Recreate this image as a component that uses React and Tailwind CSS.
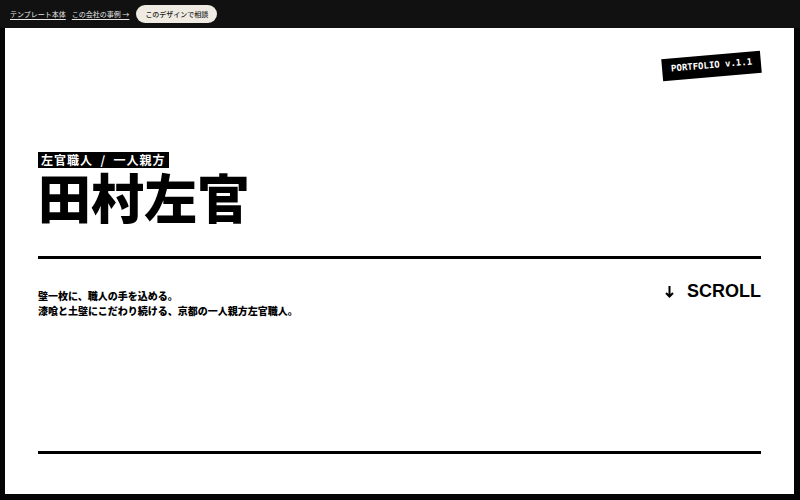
const jp = "font-['Noto_Sans_CJK_JP',sans-serif]";

const TopBar = () => (
  <div className={`h-[28px] flex items-center gap-[6px] px-[10px] text-[7px] ${jp}`}>
    <a className="text-[#e8e8e8] underline underline-offset-2">テンプレート本体</a>
    <a className="text-[#e8e8e8] underline underline-offset-2">この会社の事例 →</a>
    <button className="ml-[1px] h-[18px] px-[9px] rounded-full bg-[#efebe2] text-[#1a1a1a] font-medium">
      このデザインで相談
    </button>
  </div>
);

export default function App() {
  return (
    <div className="w-[800px] h-[500px] bg-[#111111] flex flex-col overflow-hidden">
      <TopBar />
      <div className="flex-1 pl-[5px] pr-[6px] pb-[6px] bg-[#050505]">
        <div className="relative h-full bg-white px-[33px] flex flex-col">
          {/* badge */}
          <div className="absolute right-[33px] top-[27px] -rotate-[5deg] bg-black text-white px-[9px] py-[4px] text-[9px] font-bold font-['DejaVu_Sans_Mono',monospace]">
            PORTFOLIO v.1.1
          </div>

          <div className="mt-[124px] flex flex-col items-start">
            <span className={`bg-black text-white text-[12px] font-bold leading-[16px] px-[3px] tracking-[1px] whitespace-pre ${jp}`}>
              {'左官職人  /  一人親方'}
            </span>
            <h1 className={`text-[53px] font-black leading-none mt-[2px] text-black ${jp}`}>
              田村左官
            </h1>
          </div>

          <div className="mt-[33px] h-[3px] bg-black" />

          <div className="mt-[25px] flex justify-between items-start">
            <div className={`text-[10px] font-black leading-[15px] text-black mt-[4px] ${jp}`}>
              <p>壁一枚に、職人の手を込める。</p>
              <p>漆喰と土壁にこだわり続ける、京都の一人親方左官職人。</p>
            </div>
            <div className="-mt-[6px] flex items-center gap-[13px] text-[18px] font-bold text-black font-['Liberation_Sans',sans-serif]">
              <svg width="9" height="12" viewBox="0 0 9 12" fill="none" stroke="black" strokeWidth="2">
                <path d="M4.5 0v10.5M1 7l3.5 3.5L8 7" />
              </svg>
              <span>SCROLL</span>
            </div>
          </div>

          <div className="mt-auto mb-[40px] h-[3px] bg-black" />
        </div>
      </div>
    </div>
  );
}
